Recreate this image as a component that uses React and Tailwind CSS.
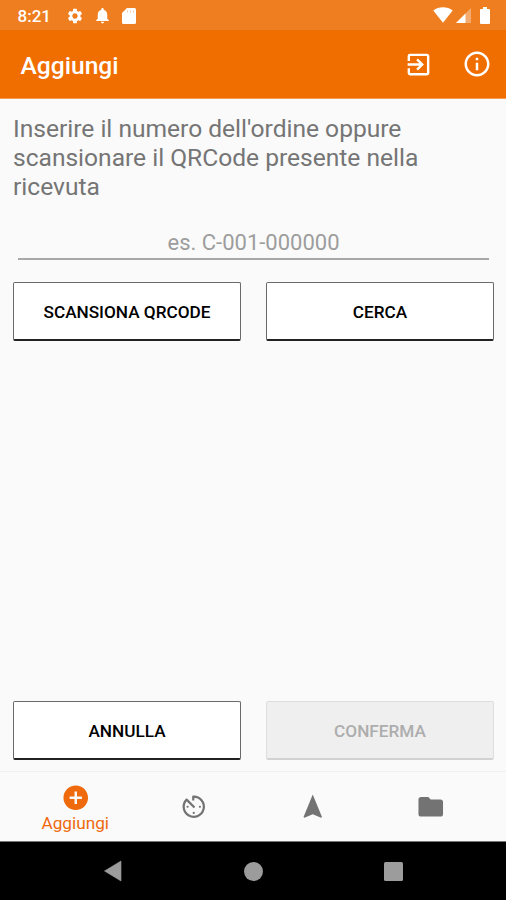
import React, { useState } from 'react'
import {
  MdSettings,
  MdExitToApp,
  MdInfoOutline,
  MdAddCircle,
  MdNavigation,
  MdFolder,
} from 'react-icons/md'

// timer dial with a thin ring and small dots
function TimerIcon({ className }){
  return (
    <svg className={className} viewBox="0 0 24 24" fill="none" stroke="currentColor" strokeWidth="1.8">
      <path d="M11.600 7V3.800A8.200 8.200 0 1 1 6.200 6.200L12.600 12.600" strokeLinejoin="round" />
      <g fill="currentColor" stroke="none">
        <circle cx="7" cy="12" r=".9" />
        <circle cx="17" cy="12" r=".9" />
        <circle cx="12" cy="17" r=".9" />
      </g>
    </svg>
  )
}

const tabs = [
  { id: 'add', label: 'Aggiungi', icon: MdAddCircle },
  { id: 'timer', label: 'In corso', icon: TimerIcon },
  { id: 'nav', label: 'Naviga', icon: MdNavigation },
  { id: 'archive', label: 'Archivio', icon: MdFolder },
]

function StatusBar(){
  return (
    <div className="h-[30px] shrink-0 bg-[#ee7e20] text-white flex items-center justify-between pl-[17.5px] pr-[16px]">
      <div className="flex items-center pt-[1px]">
        <span className="w-[48px] pt-px text-[17px] leading-[20px] font-medium">8:21</span>
        <MdSettings className="size-[18px]" />
        <svg className="size-[19px] ml-[9px]" viewBox="0 0 24 24" fill="currentColor">
          <path d="M12 22c1.100 0 2-.9 2-2h-4c0 1.100.9 2 2 2zm6-6v-5c0-3.070-1.640-5.640-4.500-6.320V4c0-.83-.67-1.500-1.500-1.500s-1.500.67-1.500 1.500v.68C7.630 5.360 6 7.920 6 11v5l-2 2v1h16v-1z" />
        </svg>
        <svg className="w-[14px] h-[16px] ml-[10px]" viewBox="0 0 14 16" fill="currentColor">
          <path d="M5 0h7.500Q14 0 14 1.500v13q0 1.500-1.500 1.500h-11Q0 16 0 14.500V5z" />
          <path d="M5 2.500h1v2h-1zM8 2.500h1v2h-1zM11 2.500h1v2h-1z" fill="#ee7e20" opacity=".4" />
        </svg>
      </div>
      <div className="flex items-center">
        <svg className="w-[20px] h-[16px]" viewBox="0 0 20 16" fill="currentColor">
          <path d="M10 15.700.3 3.400C5.800-.9 14.200-.9 19.700 3.400z" />
        </svg>
        <svg className="w-[15px] h-[15px] ml-[3px]" viewBox="0 0 15 15" fill="currentColor">
          <path opacity=".35" d="M0 15 15 0v15z" />
          <path d="M0 15 9.500 5.500V15z" />
        </svg>
        <svg className="w-[10px] h-[17px] ml-[9px]" viewBox="0 0 10 17" fill="currentColor">
          <path d="M3 0h4v2h2q1 0 1 1v13q0 1-1 1H1q-1 0-1-1V3q0-1 1-1h2z" />
        </svg>
      </div>
    </div>
  )
}

function OutlineButton({ children, disabled, onClick }){
  const look = disabled
    ? 'bg-[#efefef] text-[#adadad] border-[#dedede] border-b-[#d2d2d2]'
    : 'bg-white text-black border-[#6a6a6a] border-b-[#222222]'
  return (
    <button
      disabled={disabled}
      onClick={onClick}
      className={`h-[59px] rounded-[2px] border border-b-2 pt-[3px] text-[17.2px] font-medium ${look}`}
    >
      {children}
    </button>
  )
}

export default function App(){
  const [order, setOrder] = useState('')
  const [tab, setTab] = useState('add')

  return (
    <div className="w-full h-screen flex flex-col bg-[#fafafa] font-['Roboto',sans-serif] overflow-hidden">
      <StatusBar />
      <header className="h-[69px] shrink-0 bg-[#f06d00] border-b border-[#f59a50] text-white flex items-center pl-[20.5px] pr-[14px]">
        <h1 className="flex-1 text-[24.6px] leading-[30px] font-medium pt-[3px]">Aggiungi</h1>
        <MdExitToApp className="size-[29px]" />
        <MdInfoOutline className="size-[30px] ml-[29px]" />
      </header>

      <main className="flex-1 flex flex-col pl-[13px] pr-[12px] pt-[15px] pb-[11px]">
        <p className="text-[24.6px] leading-[29px] text-[#757575] tracking-[-0.02px]">
          Inserire il numero dell'ordine oppure scansionare il QRCode presente nella ricevuta
        </p>
        <input
          className="mt-[26px] mx-[5px] h-[33px] pb-[1px] border-b-2 border-[#a8a8a8] bg-transparent text-center text-[22px] text-[#737373] placeholder:text-[#9d9d9d] outline-none"
          placeholder="es. C-001-000000"
          value={order}
          onChange={e => setOrder(e.target.value)}
        />
        <div className="mt-[22px] grid grid-cols-2 gap-[25px]">
          <OutlineButton>SCANSIONA QRCODE</OutlineButton>
          <OutlineButton>CERCA</OutlineButton>
        </div>
        <div className="mt-auto grid grid-cols-2 gap-[25px]">
          <OutlineButton onClick={() => setOrder('')}>ANNULLA</OutlineButton>
          <OutlineButton disabled>CONFERMA</OutlineButton>
        </div>
      </main>

      <nav className="h-[71px] shrink-0 border-t border-[#f0f0f0] border-b border-b-[#777777] px-[16px] grid grid-cols-4">
        {tabs.map(t => {
          const Icon = t.icon
          const active = t.id === tab
          return (
            <button
              key={t.id}
              aria-label={t.label}
              onClick={() => setTab(t.id)}
              className={`flex flex-col items-center justify-center ${active ? 'pt-[3px] text-[#ee6a0c]' : 'pt-px text-[#737373]'}`}
            >
              <Icon className="size-[29.5px]" />
              {active && <span className="text-[17.2px] leading-[20px] mt-px">{t.label}</span>}
            </button>
          )
        })}
      </nav>

      <div className="h-[58px] shrink-0 bg-black text-[#9c9c9c] flex items-center justify-center gap-[121px]">
        <svg className="w-[19px] h-[22px]" viewBox="0 0 19 22" fill="currentColor">
          <path d="M17 1v20L.5 11z" stroke="currentColor" strokeWidth=".6" strokeLinejoin="round" />
        </svg>
        <span className="size-[19px] rounded-full bg-[#9c9c9c]" />
        <span className="size-[19px] rounded-[1.5px] bg-[#9c9c9c]" />
      </div>
    </div>
  )
}
